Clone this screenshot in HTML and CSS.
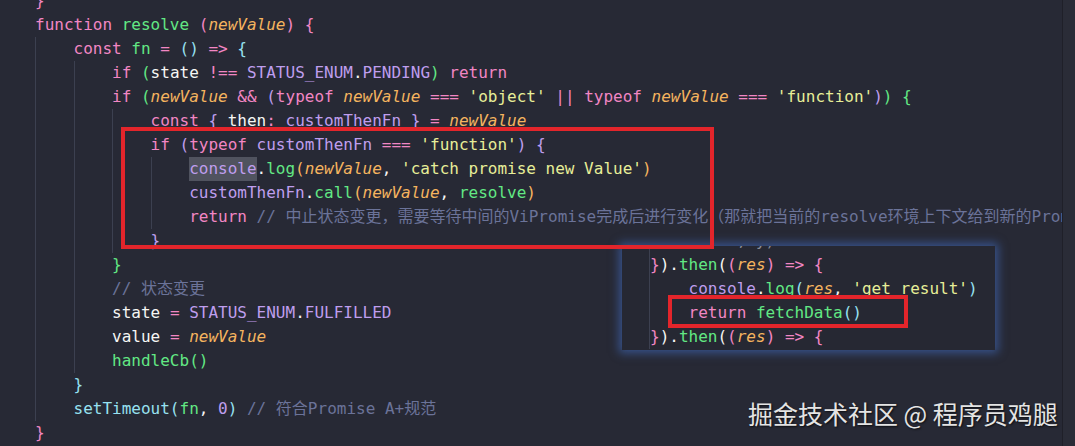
FILE: index.html
```html
<!DOCTYPE html>
<html lang="zh">
<head>
<meta charset="utf-8">
<title>resolve</title>
<link rel="stylesheet" href="styles.css">
</head>
<body>
<div class="editor">
  <div class="code">
    <div class="ln"><span class="b2">}</span></div>
    <div class="ln"><span class="k">function</span> <span class="f">resolve</span> <span class="b2">(</span><span class="p">newValue</span><span class="b2">)</span> <span class="b2">{</span></div>
    <div class="ln"><span class="ig"></span><span class="k">const</span> <span class="f">fn</span> <span class="k">=</span> <span class="b3">()</span> <span class="k">=&gt;</span> <span class="b3">{</span></div>
    <div class="ln"><span class="ig"></span><span class="ig"></span><span class="k">if</span> <span class="b4">(</span><span class="w">state</span> <span class="k">!==</span> <span class="c">STATUS_ENUM</span><span class="w">.</span><span class="c">PENDING</span><span class="b4">)</span> <span class="k">return</span></div>
    <div class="ln"><span class="ig"></span><span class="ig"></span><span class="k">if</span> <span class="b4">(</span><span class="p">newValue</span> <span class="k">&amp;&amp;</span> <span class="b5">(</span><span class="k">typeof</span> <span class="p">newValue</span> <span class="k">===</span> <span class="s">'object'</span> <span class="k">||</span> <span class="k">typeof</span> <span class="p">newValue</span> <span class="k">===</span> <span class="s">'function'</span><span class="b5">)</span><span class="b4">)</span> <span class="b4">{</span></div>
    <div class="ln"><span class="ig"></span><span class="ig"></span><span class="ig"></span><span class="k">const</span> <span class="b5">{</span> <span class="w">then</span><span class="k">:</span> <span class="c">customThenFn</span> <span class="b5">}</span> <span class="k">=</span> <span class="p">newValue</span></div>
    <div class="ln"><span class="ig"></span><span class="ig"></span><span class="ig"></span><span class="k">if</span> <span class="b5">(</span><span class="k">typeof</span> <span class="c">customThenFn</span> <span class="k">===</span> <span class="s">'function'</span><span class="b5">)</span> <span class="b5">{</span></div>
    <div class="ln"><span class="ig"></span><span class="ig"></span><span class="ig"></span><span class="ig"></span><span class="c sel">console</span><span class="w">.</span><span class="f">log</span><span class="b6">(</span><span class="p">newValue</span><span class="w">,</span> <span class="s">'catch promise new Value'</span><span class="b6">)</span></div>
    <div class="ln"><span class="ig"></span><span class="ig"></span><span class="ig"></span><span class="ig"></span><span class="c">customThenFn</span><span class="w">.</span><span class="f">call</span><span class="b6">(</span><span class="p">newValue</span><span class="w">,</span> <span class="f">resolve</span><span class="b6">)</span></div>
    <div class="ln"><span class="ig"></span><span class="ig"></span><span class="ig"></span><span class="ig"></span><span class="k">return</span> <span class="cm">// 中止状态变更，需要等待中间的ViPromise完成后进行变化（那就把当前的resolve环境上下文给到新的Promise中去）</span></div>
    <div class="ln"><span class="ig"></span><span class="ig"></span><span class="ig"></span><span class="b5">}</span></div>
    <div class="ln"><span class="ig"></span><span class="ig"></span><span class="b4">}</span></div>
    <div class="ln"><span class="ig"></span><span class="ig"></span><span class="cm">// 状态变更</span></div>
    <div class="ln"><span class="ig"></span><span class="ig"></span><span class="w">state</span> <span class="k">=</span> <span class="c">STATUS_ENUM</span><span class="w">.</span><span class="c">FULFILLED</span></div>
    <div class="ln"><span class="ig"></span><span class="ig"></span><span class="w">value</span> <span class="k">=</span> <span class="p">newValue</span></div>
    <div class="ln"><span class="ig"></span><span class="ig"></span><span class="f">handleCb</span><span class="b4">()</span></div>
    <div class="ln"><span class="ig"></span><span class="b3">}</span></div>
    <div class="ln"><span class="ig"></span><span class="cy">setTimeout</span><span class="b3">(</span><span class="f">fn</span><span class="w">,</span> <span class="c">0</span><span class="b3">)</span> <span class="cm">// 符合Promise A+规范</span></div>
    <div class="ln"><span class="b2">}</span></div>
  </div>
  <div class="rail"></div>

  <div class="popup">
    <div class="popup-code">
      <div class="ln"><span class="dim">        x, y)</span></div>
      <div class="ln"><span class="b2">}</span><span class="w">)</span><span class="w">.</span><span class="f">then</span><span class="w">(</span><span class="b2">(</span><span class="p">res</span><span class="b2">)</span> <span class="k">=&gt;</span> <span class="b2">{</span></div>
      <div class="ln">    <span class="c">console</span><span class="w">.</span><span class="f">log</span><span class="b3">(</span><span class="p">res</span><span class="w">,</span> <span class="s">'get result'</span><span class="b3">)</span></div>
      <div class="ln">    <span class="k">return</span> <span class="f">fetchData</span><span class="b3">()</span></div>
      <div class="ln"><span class="b2">}</span><span class="w">)</span><span class="w">.</span><span class="f">then</span><span class="w">(</span><span class="b2">(</span><span class="p">res</span><span class="b2">)</span> <span class="k">=&gt;</span> <span class="b2">{</span></div>
    </div>
  </div>

  <div class="mark mark-main"></div>
  <div class="mark mark-fetch"></div>

  <div class="watermark">掘金技术社区 @ 程序员鸡腿</div>
</div>
</body>
</html>
```

FILE: styles.css
```css
* { box-sizing: border-box; }

html, body {
  margin: 0;
  padding: 0;
  background: #272935;
}

.editor {
  position: relative;
  width: 1075px;
  height: 446px;
  overflow: hidden;
  display: flex;
  background: #272935;
  font-family: "DejaVu Sans Mono", "Noto Sans CJK SC", monospace;
  font-size: 16px;
  color: #f6f6f4;
}

.code {
  flex: 1;
  min-width: 0;
  overflow: hidden;
  margin-top: -11px;
  padding-left: 35px;
}

.ln {
  height: 24px;
  line-height: 24px;
  white-space: pre;
}

.ig {
  display: inline-block;
  width: 4ch;
  height: 24px;
  vertical-align: top;
  background: linear-gradient(#3c4050, #3c4050) no-repeat 0 0 / 1px 100%;
}

.rail {
  width: 13px;
  flex: none;
  background: #2a2c37;
  border-left: 1px solid #1f2029;
}

.k { color: #f286c4; }
.f { color: #62e884; }
.p { color: #f5b45f; font-style: italic; }
.s { color: #e7ee98; }
.c { color: #bf9eee; }
.w { color: #f6f6f4; }
.cy { color: #97e1f1; }
.cm { color: #6b7399; }
.dim { color: #8a8d99; }

.b2 { color: #f286c4; }
.b3 { color: #97e1f1; }
.b4 { color: #62e884; }
.b5 { color: #bf9eee; }
.b6 { color: #f5b45f; }

.sel {
  background: #50535f;
  display: inline-block;
  height: 24px;
}

.popup {
  position: absolute;
  left: 622px;
  top: 246px;
  width: 373px;
  height: 104px;
  background: #262833;
  overflow: hidden;
  box-shadow: 0 0 9px 3px rgba(62, 98, 170, 0.75);
}

.popup-code {
  margin-top: -17px;
  margin-left: 27px;
  padding-left: 1px;
  background: linear-gradient(#3c4050, #3c4050) no-repeat 0 0 / 1px 100%;
}

.mark {
  position: absolute;
  border: 4px solid #e3252b;
}

.mark-main {
  left: 121px;
  top: 127px;
  width: 593px;
  height: 122px;
}

.mark-fetch {
  left: 668px;
  top: 295px;
  width: 240px;
  height: 33px;
}

.watermark {
  position: absolute;
  left: 748px;
  top: 397px;
  font-family: "Noto Sans CJK SC", "Noto Sans", sans-serif;
  font-size: 25px;
  line-height: 32px;
  color: #e4e4e4;
  text-shadow: 1px 1px 2px rgba(0, 0, 0, 0.7);
  white-space: nowrap;
}
```
